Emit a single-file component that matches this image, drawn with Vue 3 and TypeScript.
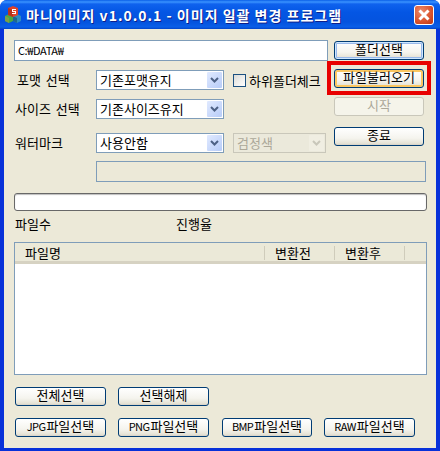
<template>
  <div class="window">
    <div class="titlebar">
      <svg class="app-icon" width="17" height="17" viewBox="0 0 17 17">
        <path d="M0 10l4-2 4 2v5l-4 2-4-2z" fill="#4aa842" />
        <path d="M0 10l4 2v5l-4-2z" fill="#7f9f45" />
        <path d="M8 10l4-2 4 2v5l-4 2-4-2z" fill="#2f8cc0" />
        <path d="M8 10l4 2v5l-4-2z" fill="#1f6790" />
        <path d="M3 2l5-2 5 2v7l-5 2-5-2z" fill="#e0442a" />
        <path d="M3 2l5 2v7l-5-2z" fill="#b8331c" />
        <path d="M7 3h4v1H8v1h3v3H7V7h3V6H7z" fill="#fff" />
      </svg>
      <span class="title">마니이미지 v1.0.0.1 - 이미지 일괄 변경 프로그램</span>
      <div class="close">
        <svg width="14" height="14" viewBox="0 0 14 14">
          <path d="M2.5 2.5l9 9M11.5 2.5l-9 9" stroke="#fff" stroke-width="3" fill="none" />
        </svg>
      </div>
    </div>

    <div class="client">
      <div class="top">
        <div class="fields">
          <div class="textbox path">C:₩DATA₩</div>

          <div class="row">
            <span class="label first">포맷 선택</span>
            <div class="select">
              <span class="value">기존포맷유지</span>
              <span class="arrow"><svg width="9" height="7" viewBox="0 0 9 7"><path d="M1 1l3.5 3.5L8 1" stroke="#4d6185" stroke-width="2" fill="none" /></svg></span>
            </div>
            <label class="check"><span class="box"></span>하위폴더체크</label>
          </div>

          <div class="row">
            <span class="label">사이즈 선택</span>
            <div class="select">
              <span class="value">기존사이즈유지</span>
              <span class="arrow"><svg width="9" height="7" viewBox="0 0 9 7"><path d="M1 1l3.5 3.5L8 1" stroke="#4d6185" stroke-width="2" fill="none" /></svg></span>
            </div>
          </div>

          <div class="row row-mark">
            <span class="label">워터마크</span>
            <div class="select">
              <span class="value">사용안함</span>
              <span class="arrow"><svg width="9" height="7" viewBox="0 0 9 7"><path d="M1 1l3.5 3.5L8 1" stroke="#4d6185" stroke-width="2" fill="none" /></svg></span>
            </div>
            <div class="select select-off">
              <span class="value">검정색</span>
              <span class="arrow"><svg width="9" height="7" viewBox="0 0 9 7"><path d="M1 1l3.5 3.5L8 1" stroke="#c9c7ba" stroke-width="2" fill="none" /></svg></span>
            </div>
          </div>
        </div>

        <div class="side">
          <button class="btn focused">폴더선택</button>
          <div class="marked">
            <button class="btn default">파일불러오기</button>
            <div class="highlight"></div>
          </div>
          <button class="btn" disabled>시작</button>
          <button class="btn end">종료</button>
        </div>
      </div>

      <div class="mark-text"></div>
      <div class="progress"></div>

      <div class="stats">
        <span class="count">파일수</span>
        <span>진행율</span>
      </div>

      <div class="list">
        <div class="list-head">
          <div v-for="col in columns" :key="col.name" class="col" :style="{ width: col.width + 'px' }">{{ col.name }}</div>
        </div>
      </div>

      <div class="actions">
        <button class="btn wide">전체선택</button>
        <button class="btn wide">선택해제</button>
      </div>
      <div class="actions types">
        <button v-for="t in fileTypes" :key="t" class="btn wide"><span class="latin">{{ t }}</span>파일선택</button>
      </div>
    </div>
  </div>
</template>

<script setup lang="ts">
const columns = [
  { name: '파일명', width: 250 },
  { name: '변환전', width: 70 },
  { name: '변환후', width: 70 }
]

const fileTypes: string[] = ['JPG', 'PNG', 'BMP', 'RAW']
</script>

<style>
html,
body {
  margin: 0;
  background: #fff;
}
</style>

<style scoped>
.window {
  width: 440px;
  height: 451px;
  display: flex;
  flex-direction: column;
  box-sizing: border-box;
  background: #0831d9;
  border-radius: 7px 7px 0 0;
  overflow: hidden;
  font-family: 'Noto Sans CJK KR', 'Liberation Sans', sans-serif;
  font-size: 13px;
  color: #000;
}
.titlebar {
  height: 29px;
  flex: none;
  display: flex;
  align-items: center;
  padding: 0 6px 0 5px;
  background: linear-gradient(#0a5fe8 0, #3a93ff 2px, #0f62ee 4px, #0456e4 12px, #0453de 22px, #0a5fe8 27px, #0344c8 29px);
}
.app-icon {
  flex: none;
  margin-right: 4px;
}
.title {
  flex: 1;
  color: #fff;
  font-size: 14px;
  font-weight: 700;
  letter-spacing: 1px;
  white-space: nowrap;
  text-shadow: 1px 1px 0 #0f1f8a;
}
.close {
  width: 20px;
  height: 20px;
  flex: none;
  box-sizing: border-box;
  display: flex;
  align-items: center;
  justify-content: center;
  border: 1px solid #fff;
  border-radius: 3px;
  background: radial-gradient(circle at 35% 30%, #ec8b6c, #d9522c 60%, #bb3613);
}
.client {
  flex: 1;
  margin: 0 4px 3px;
  padding: 11px 0 0 10px;
  background: #ece9d8;
  min-height: 0;
}
.top {
  display: flex;
  gap: 6px;
}
.fields {
  width: 314px;
  display: flex;
  flex-direction: column;
}
.textbox {
  box-sizing: border-box;
  border: 1px solid #7f9db9;
  background: #fff;
}
.path {
  height: 21px;
  line-height: 18px;
  padding-left: 3px;
  font-size: 11px;
  letter-spacing: -0.4px;
}
.row {
  display: flex;
  align-items: center;
  height: 20px;
  margin-top: 9px;
}
.row-mark {
  margin-top: 14px;
}
.label {
  width: 82px;
  padding-left: 1px;
  box-sizing: border-box;
  word-spacing: 2px;
  flex: none;
  line-height: 18px;
  margin-top: -1px;
}
.label.first {
  padding-left: 3px;
}
.select {
  width: 128px;
  height: 20px;
  flex: none;
  box-sizing: border-box;
  border: 1px solid #7f9db9;
  background: #fff;
  display: flex;
  align-items: center;
  justify-content: space-between;
  padding: 1px;
}
.value {
  padding-left: 2px;
  line-height: 16px;
  margin-top: -1px;
}
.arrow {
  width: 15px;
  height: 16px;
  display: flex;
  align-items: center;
  justify-content: center;
  background: linear-gradient(135deg, #e1eaff, #b7ccf8);
  border-radius: 1px;
}
.select-off {
  width: 93px;
  margin-left: 9px;
  border-color: #c9c7ba;
  background: #ebe9db;
  color: #aca899;
}
.select-off .arrow {
  background: #f0eee2;
}
.check {
  display: flex;
  align-items: center;
  margin-left: 9px;
  gap: 3px;
  white-space: nowrap;
}
.box {
  width: 13px;
  height: 13px;
  box-sizing: border-box;
  border: 1px solid #1c5180;
  background: linear-gradient(135deg, #dcdcd7, #fff);
}
.side {
  width: 90px;
  display: flex;
  flex-direction: column;
  padding-top: 1px;
  gap: 9px;
}
.marked {
  position: relative;
  height: 19px;
  display: flex;
}
.highlight {
  position: absolute;
  inset: -8px -7px -7px -7px;
  border: 4px solid #e80000;
  pointer-events: none;
}
.btn {
  height: 19px;
  width: 90px;
  padding: 0 0 3px;
  box-sizing: border-box;
  font: inherit;
  color: #000;
  line-height: 14px;
  border: 1px solid #003c74;
  border-radius: 3px;
  background: linear-gradient(#fff, #f5f4ee 60%, #e6e3d6 90%, #d6d0c5);
}
.btn:disabled {
  border-color: #c9c7ba;
  background: #f5f4ea;
  color: #aca899;
}
.btn.end {
  margin-top: 2px;
}
.btn.focused {
  box-shadow: inset 0 0 0 1px #cee7ff, inset 0 0 0 2px #98b8ea;
}
.btn.default {
  box-shadow: inset 0 0 0 2px #fbc761;
}
.mark-text {
  width: 330px;
  height: 21px;
  box-sizing: border-box;
  margin: 8px 0 0 82px;
  border: 1px solid #7f9db9;
}
.progress {
  width: 413px;
  height: 18px;
  box-sizing: border-box;
  margin-top: 11px;
  border: 1px solid #686868;
  border-radius: 3px;
  background: #fff;
  box-shadow: inset 0 1px 1px #bebebe;
}
.stats {
  height: 31px;
  display: flex;
  align-items: flex-start;
  line-height: 18px;
  padding: 4px 0 0 1px;
  box-sizing: border-box;
}
.count {
  width: 161px;
}
.list {
  width: 413px;
  height: 133px;
  box-sizing: border-box;
  border: 1px solid #7f9db9;
  background: #fff;
}
.list-head {
  height: 21px;
  display: flex;
  box-sizing: border-box;
  background: #ebe9d8;
  border-bottom: 3px solid #d6d2c2;
}
.col {
  box-sizing: border-box;
  flex: none;
  padding-left: 10px;
  line-height: 13px;
  border-right: 1px solid #cfccbb;
  margin: 3px 0 1px;
}
.actions {
  display: flex;
  gap: 12px;
  margin: 12px 0 0 1px;
}
.btn.wide {
  width: 91px;
}
.types .btn:nth-child(3) {
  width: 90px;
  margin-left: 1px;
}
.latin {
  font-size: 11px;
  letter-spacing: -0.6px;
  margin-right: 1px;
}
</style>
